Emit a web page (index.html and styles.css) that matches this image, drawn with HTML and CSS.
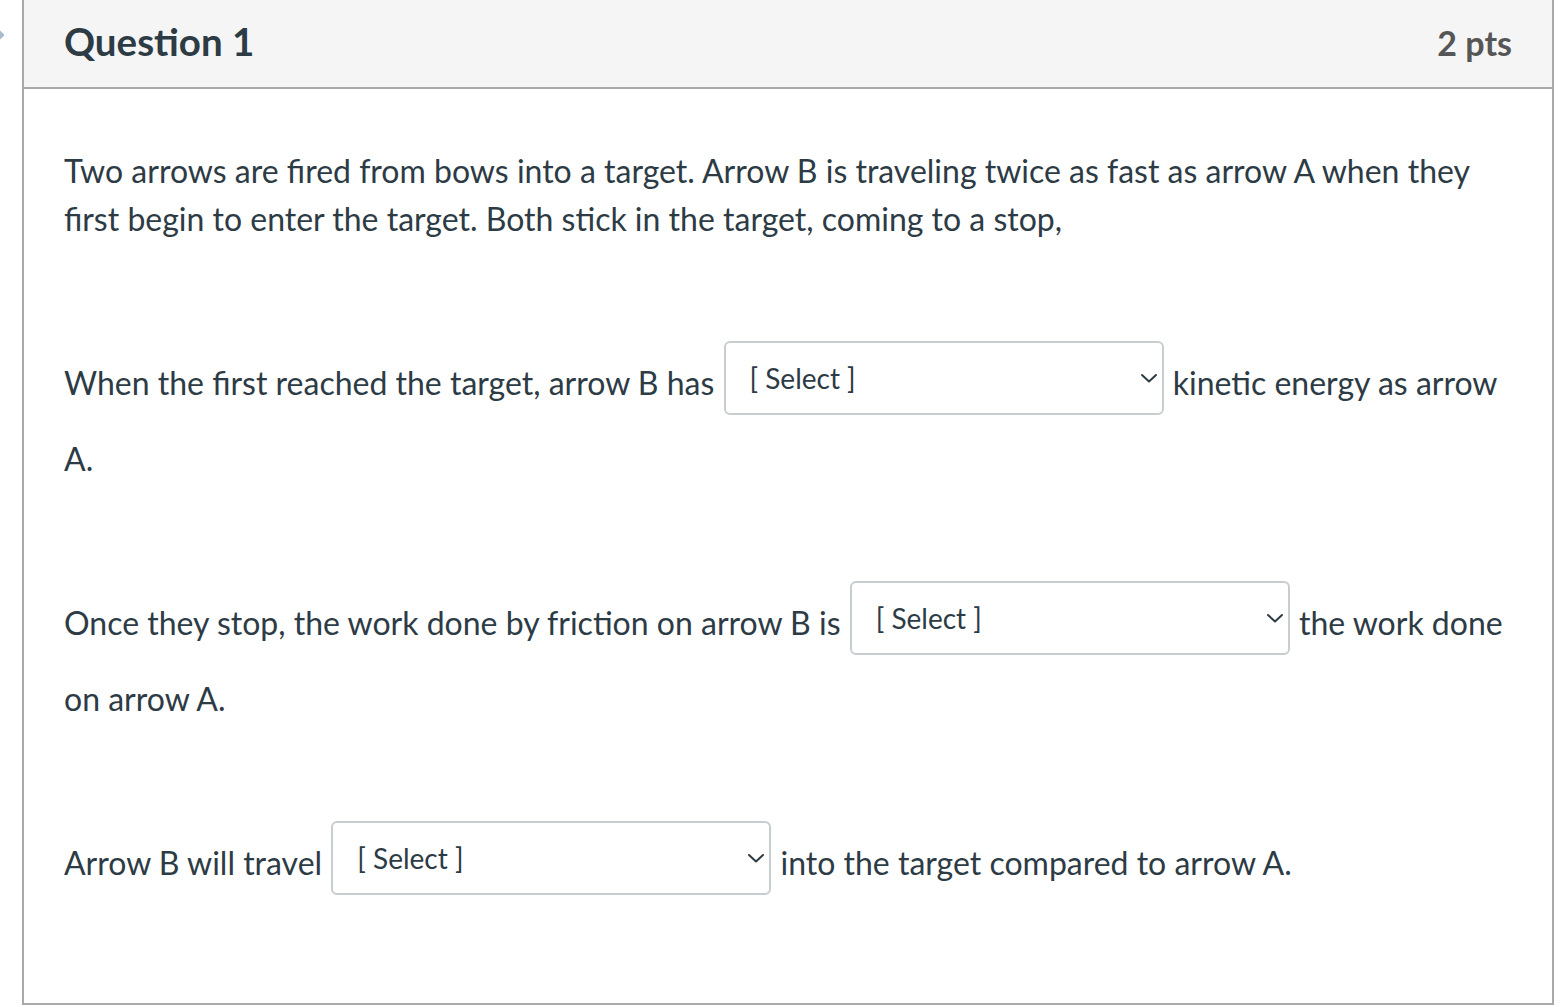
FILE: index.html
```html
<!DOCTYPE html>
<html lang="en">
<head>
<meta charset="utf-8">
<title>Question 1</title>
<link rel="stylesheet" href="styles.css">
</head>
<body>
<div class="page">
  <svg class="flag" width="14" height="20" viewBox="0 0 14 20" aria-hidden="true"><path d="M2 3 L10 10 L2 17" fill="none" stroke="#a9bccd" stroke-width="4" stroke-linejoin="round" stroke-linecap="round"/></svg>
  <div class="card">
    <div class="card-header">
      <h2 class="title">Question 1</h2>
      <div class="points">2 pts</div>
    </div>
    <div class="card-body">
      <p class="para">Two arrows are fired from bows into a target. Arrow B is traveling twice as fast as arrow A when they first begin to enter the target. Both stick in the target, coming to a stop,</p>
      <p class="para">When the first reached the target, arrow B has <span class="select"><span class="select-text">[ Select ]</span><svg class="chev" width="18" height="10" viewBox="0 0 18 10"><path d="M2 2 L9 8.5 L16 2" fill="none" stroke="#2d3b45" stroke-width="2" stroke-linecap="round" stroke-linejoin="round"/></svg></span> kinetic energy as arrow A.</p>
      <p class="para">Once they stop, the work done by friction on arrow B is <span class="select"><span class="select-text">[ Select ]</span><svg class="chev" width="18" height="10" viewBox="0 0 18 10"><path d="M2 2 L9 8.5 L16 2" fill="none" stroke="#2d3b45" stroke-width="2" stroke-linecap="round" stroke-linejoin="round"/></svg></span> the work done on arrow A.</p>
      <p class="para">Arrow B will travel <span class="select"><span class="select-text">[ Select ]</span><svg class="chev" width="18" height="10" viewBox="0 0 18 10"><path d="M2 2 L9 8.5 L16 2" fill="none" stroke="#2d3b45" stroke-width="2" stroke-linecap="round" stroke-linejoin="round"/></svg></span> into the target compared to arrow A.</p>
    </div>
  </div>
</div>
</body>
</html>
```

FILE: styles.css
```css
html, body {
  margin: 0;
  padding: 0;
  background: #ffffff;
}

body {
  font-family: Lato, "Open Sans", "Liberation Sans", sans-serif;
  color: #2d3b45;
  overflow: hidden;
}

.page {
  position: relative;
  padding-left: 22px;
}

.flag {
  position: absolute;
  left: -8px;
  top: 25px;
}

.card {
  width: 1532px;
  box-sizing: border-box;
  border: 2px solid #a9a9a9;
  border-top: none;
  background: #ffffff;
}

.card-header {
  display: flex;
  align-items: center;
  justify-content: space-between;
  box-sizing: border-box;
  height: 89px;
  padding: 0 40px 4px;
  background: #f5f5f5;
  border-bottom: 2px solid #a9a9a9;
}

.title {
  margin: 0;
  font-size: 38.5px;
  font-weight: 700;
  color: #2d3b45;
  line-height: 1;
}

.points {
  font-size: 34px;
  font-weight: 700;
  color: #565656;
  line-height: 1;
  padding-top: 2px;
}

.card-body {
  padding: 58px 40px 88px;
  font-size: 32px;
  line-height: 48px;
}

.para {
  margin: 0 0 98px;
}

.para:last-child {
  margin-bottom: 0;
}

.select {
  display: inline-flex;
  align-items: center;
  justify-content: space-between;
  box-sizing: border-box;
  width: 440px;
  height: 74px;
  padding: 0 4px 0 24px;
  margin: 0 1px 20px 1px;
  border: 2px solid #c7cdd1;
  border-radius: 6px;
  background: #ffffff;
  vertical-align: 6px;
  line-height: 1;
}

.select-text {
  font-size: 28px;
  color: #2d3b45;
}

.chev {
  display: block;
}
```
